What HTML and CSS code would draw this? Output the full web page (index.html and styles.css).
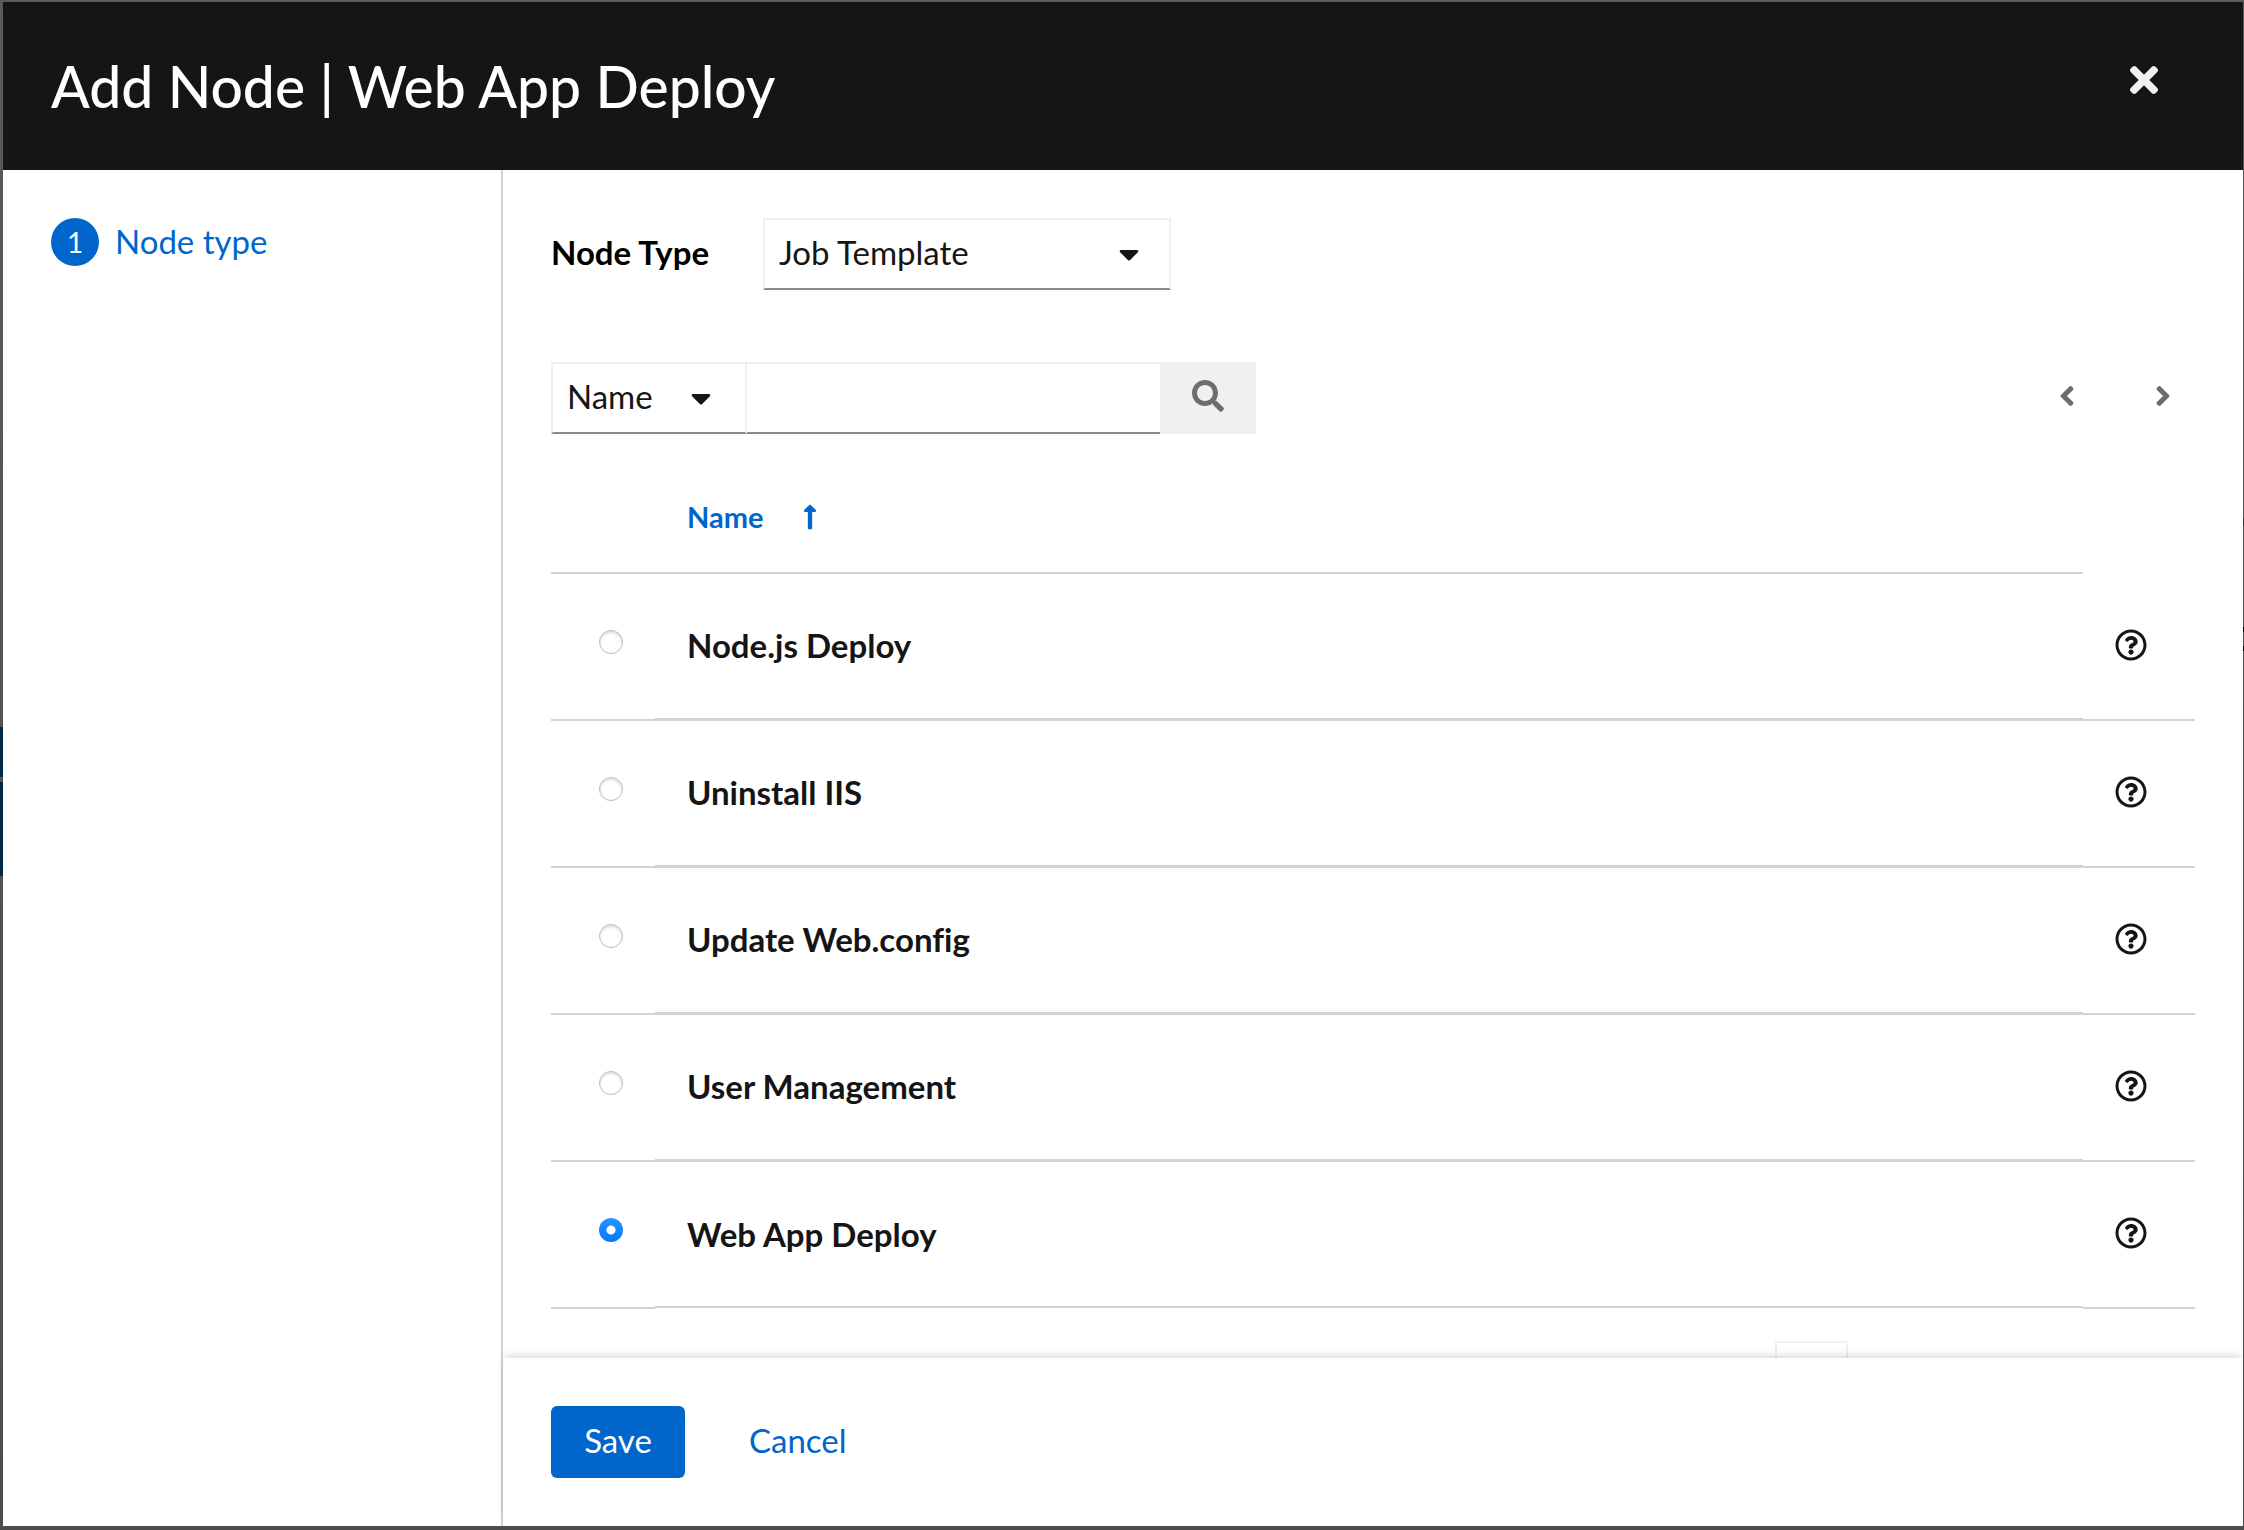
FILE: index.html
```html
<!DOCTYPE html>
<html lang="en">
<head>
<meta charset="utf-8">
<meta name="viewport" content="width=device-width, initial-scale=1">
<title>Add Node | Web App Deploy</title>
<link rel="stylesheet" href="styles.css">
</head>
<body>
<svg class="sprite" aria-hidden="true">
  <symbol id="caret-down" viewBox="0 0 320 512"><path d="M31.3 192h257.3c17.8 0 26.7 21.5 14.1 34.1L174.1 354.8c-7.8 7.8-20.5 7.8-28.3 0L17.2 226.1C4.6 213.5 13.5 192 31.3 192z"/></symbol>
  <symbol id="help" viewBox="0 0 512 512"><path d="M256 8C119.043 8 8 119.083 8 256c0 136.997 111.043 248 248 248s248-111.003 248-248C504 119.083 392.957 8 256 8zm0 448c-110.532 0-200-89.431-200-200 0-110.495 89.472-200 200-200 110.491 0 200 89.471 200 200 0 110.53-89.431 200-200 200zm107.244-255.2c0 67.052-72.421 68.084-72.421 92.863V300c0 6.627-5.373 12-12 12h-45.647c-6.627 0-12-5.373-12-12v-8.659c0-35.745 27.1-50.034 47.579-61.516 17.561-9.845 28.324-16.541 28.324-29.579 0-17.246-21.999-28.693-39.784-28.693-23.189 0-33.894 10.977-48.942 29.969-4.057 5.12-11.46 6.071-16.666 2.124l-27.824-21.098c-5.107-3.872-6.251-11.066-2.644-16.363C184.846 131.491 214.94 112 261.794 112c49.071 0 101.45 38.304 101.45 88.8zM298 368c0 23.159-18.841 42-42 42s-42-18.841-42-42 18.841-42 42-42 42 18.841 42 42z"/></symbol>
</svg>
<div class="wizard" role="dialog" aria-labelledby="wizard-title">
  <header class="wizard-header">
    <h1 id="wizard-title">Add Node | Web App Deploy</h1>
    <button class="close" type="button" aria-label="Close">
      <svg viewBox="0 80 352 352" width="28" height="28"><path d="M242.72 256l100.07-100.07c12.28-12.28 12.28-32.19 0-44.48l-22.24-22.24c-12.28-12.28-32.19-12.28-44.48 0L176 189.28 75.93 89.21c-12.28-12.28-32.19-12.28-44.48 0L9.21 111.45c-12.28 12.28-12.28 32.19 0 44.48L109.28 256 9.21 356.07c-12.28 12.28-12.28 32.19 0 44.48l22.24 22.24c12.28 12.28 32.2 12.28 44.48 0L176 322.72l100.07 100.07c12.28 12.28 32.2 12.28 44.48 0l22.24-22.24c12.28-12.28 12.28-32.19 0-44.48L242.72 256z"/></svg>
    </button>
  </header>
  <div class="wizard-body">
    <nav class="steps" aria-label="Steps">
      <a class="step" href="#node-type"><span class="step-number">1</span>Node type</a>
    </nav>
    <form class="panel">
      <div class="panel-scroll">
        <div class="type-row">
          <label class="type-label" for="node-type">Node Type</label>
          <span class="select type-select">
            <select id="node-type"><option>Job Template</option></select>
            <svg class="caret" width="20" height="32" aria-hidden="true"><use href="#caret-down"/></svg>
          </span>
        </div>
        <div class="toolbar">
          <span class="select key-select">
            <select id="search-key" aria-label="Search key"><option>Name</option></select>
            <svg class="caret" width="20" height="32" aria-hidden="true"><use href="#caret-down"/></svg>
          </span>
          <input class="search-input" type="text" aria-label="Search text">
          <button class="search-button" type="button" aria-label="Search">
            <svg viewBox="0 0 512 512" width="32" height="32"><path d="M505 442.7L405.3 343c-4.5-4.5-10.6-7-17-7H372c27.6-35.3 44-79.7 44-128C416 93.1 322.9 0 208 0S0 93.1 0 208s93.1 208 208 208c48.3 0 92.7-16.4 128-44v16.3c0 6.4 2.5 12.5 7 17l99.7 99.7c9.4 9.4 24.6 9.4 33.9 0l28.3-28.3c9.4-9.4 9.4-24.6.1-34zM208 336c-70.7 0-128-57.2-128-128 0-70.7 57.2-128 128-128 70.7 0 128 57.2 128 128 0 70.7-57.2 128-128 128z"/></svg>
          </button>
          <div class="pager">
            <button type="button" aria-label="Previous page"><svg viewBox="0 0 256 512" width="16" height="32"><path d="M31.7 239l136-136c9.4-9.4 24.6-9.4 33.9 0l22.6 22.6c9.4 9.4 9.4 24.6 0 33.9L127.9 256l96.4 96.4c9.4 9.4 9.4 24.6 0 33.9L201.7 409c-9.4 9.4-24.6 9.4-33.9 0l-136-136c-9.5-9.4-9.5-24.6-.1-34z"/></svg></button>
            <button type="button" aria-label="Next page"><svg viewBox="0 0 256 512" width="16" height="32"><path d="M224.3 273l-136 136c-9.4 9.4-24.6 9.4-33.9 0l-22.6-22.6c-9.4-9.4-9.4-24.6 0-33.9l96.4-96.4-96.4-96.4c-9.4-9.4-9.4-24.6 0-33.9L54.3 103c9.4-9.4 24.6-9.4 33.9 0l136 136c9.5 9.4 9.5 24.6.1 34z"/></svg></button>
          </div>
        </div>
        <table class="templates">
          <thead>
            <tr>
              <td class="pick"></td>
              <th class="name" scope="col"><button class="sort" type="button">Name<svg viewBox="0 0 256 512" width="14" height="28"><path d="M88 166.059V468c0 6.627 5.373 12 12 12h56c6.627 0 12-5.373 12-12V166.059h46.059c21.382 0 32.09-25.851 16.971-40.971l-86.059-86.059c-9.373-9.373-24.569-9.373-33.941 0l-86.059 86.059c-15.119 15.119-4.411 40.971 16.971 40.971H88z"/></svg></button></th>
              <td class="more"></td>
            </tr>
          </thead>
          <tbody>
            <tr>
              <td class="pick"><input type="radio" name="template" id="t1"></td>
              <td class="name"><label for="t1">Node.js Deploy</label></td>
              <td class="more"><button type="button" aria-label="About Node.js Deploy"><svg width="32" height="32"><use href="#help"/></svg></button></td>
            </tr>
            <tr>
              <td class="pick"><input type="radio" name="template" id="t2"></td>
              <td class="name"><label for="t2">Uninstall IIS</label></td>
              <td class="more"><button type="button" aria-label="About Uninstall IIS"><svg width="32" height="32"><use href="#help"/></svg></button></td>
            </tr>
            <tr>
              <td class="pick"><input type="radio" name="template" id="t3"></td>
              <td class="name"><label for="t3">Update Web.config</label></td>
              <td class="more"><button type="button" aria-label="About Update Web.config"><svg width="32" height="32"><use href="#help"/></svg></button></td>
            </tr>
            <tr>
              <td class="pick"><input type="radio" name="template" id="t4"></td>
              <td class="name"><label for="t4">User Management</label></td>
              <td class="more"><button type="button" aria-label="About User Management"><svg width="32" height="32"><use href="#help"/></svg></button></td>
            </tr>
            <tr>
              <td class="pick"><input type="radio" name="template" id="t5" checked></td>
              <td class="name"><label for="t5">Web App Deploy</label></td>
              <td class="more"><button type="button" aria-label="About Web App Deploy"><svg width="32" height="32"><use href="#help"/></svg></button></td>
            </tr>
          </tbody>
        </table>
        <div class="page-picker"><input type="text" aria-label="Current page"></div>
      </div>
      <footer class="wizard-footer">
        <button class="save" type="button">Save</button>
        <button class="cancel" type="button">Cancel</button>
      </footer>
    </form>
  </div>
</div>
</body>
</html>
```
FILE: styles.css
```css
:root {
  --text: #151515;
  --blue: #06c;
  --line: #d2d2d2;
  --field: #f0f0f0;
  --field-line: #8a8d90;
  --muted: #6a6e73;
}

* {
  box-sizing: border-box;
}

body {
  margin: 0;
  padding: 2px 1px 4px 3px;
  height: 100vh;
  /* the dimmed page that shows round the dialog */
  background:
    linear-gradient(#00294a, #00294a) 0 727px / 3px 50px no-repeat,
    linear-gradient(#00294a, #00294a) 0 782px / 3px 94px no-repeat,
    linear-gradient(#333, #333) 100% 518px / 1px 8px no-repeat,
    linear-gradient(#000, #000) 100% 627px / 1px 5px no-repeat,
    linear-gradient(#000, #000) 100% 646px / 1px 5px no-repeat,
    linear-gradient(#5a5a5a, #4d4d4d);
  color: var(--text);
  font: 33px/48px Lato, "Open Sans", sans-serif;
  font-variant-ligatures: none;
}

button,
input,
select {
  margin: 0;
  padding: 0;
  border: 0;
  border-radius: 0;
  background: none;
  color: inherit;
  font: inherit;
}

svg {
  display: block;
  fill: currentColor;
}

.sprite {
  position: absolute;
  width: 0;
  height: 0;
}

.wizard {
  display: flex;
  flex-direction: column;
  height: 100%;
  background: #fff;
}

.wizard-header {
  display: flex;
  align-items: flex-start;
  justify-content: space-between;
  padding: 48px;
  background: var(--text);
  color: #fff;
}

h1 {
  margin: 0;
  font-size: 57px;
  font-weight: 500;
  line-height: 72px;
}

.close {
  padding: 16px 37px;
  color: var(--field);
}

.wizard-body {
  display: flex;
  flex: 1;
  min-height: 0;
}

.steps {
  flex: 0 0 500px;
  padding: 48px;
  border-right: 2px solid var(--line);
}

.step {
  display: flex;
  gap: 16px;
  color: var(--blue);
  line-height: 46px;
  text-decoration: none;
}

.step-number {
  width: 48px;
  height: 48px;
  border-radius: 50%;
  background: var(--blue);
  color: #fff;
  font-size: 28px;
  line-height: 48px;
  text-align: center;
}

.panel {
  display: flex;
  flex: 1;
  flex-direction: column;
  min-width: 0;
}

.panel-scroll {
  flex: 1;
  min-height: 0;
  padding: 48px 48px 0;
  overflow: auto;
  scrollbar-width: none;
}

.type-row {
  display: flex;
  align-items: center;
}

.type-label {
  width: 212px;
  padding-bottom: 4px;
  color: #000;
  font-weight: 700;
}

.select {
  display: grid;
  align-items: center;
}

.select > * {
  grid-area: 1 / 1;
}

.select select {
  width: 100%;
  height: 72px;
  padding: 0 64px 4px 14px;
  border: 2px solid var(--field);
  border-bottom-color: var(--field-line);
  appearance: none;
}

.caret {
  justify-self: end;
  margin-right: 32px;
  pointer-events: none;
}

.type-select {
  width: 408px;
}

.toolbar {
  display: flex;
  margin-top: 72px;
}

.key-select {
  width: 196px;
}

.key-select .caret {
  margin-right: 36px;
}

.search-input {
  width: 413px;
  height: 72px;
  padding: 0 16px;
  border-top: 2px solid var(--field);
  border-bottom: 2px solid var(--field-line);
}

.search-button {
  display: grid;
  place-items: center;
  width: 96px;
  padding-bottom: 4px;
  background: var(--field);
  color: var(--muted);
}

.pager {
  display: flex;
  margin-left: auto;
  color: var(--muted);
}

.pager button {
  display: grid;
  place-items: center;
  width: 64px;
  padding-bottom: 4px;
}

.pager button + button {
  margin-left: 32px;
}

.templates {
  width: 100%;
  margin-top: 28px;
  border-collapse: separate;
  border-spacing: 0;
  table-layout: fixed;
}

.templates td,
.templates th {
  height: 147px;
  padding: 0 0 3px;
  border-bottom: 2px solid var(--line);
  text-align: left;
}

.templates thead td,
.templates thead th {
  height: 112px;
  padding: 0;
}

.templates .pick {
  width: 104px;
  padding: 0 0 10px 48px;
}

.templates .name {
  padding-left: 32px;
  font-weight: 700;
}

.templates .more {
  width: 112px;
  padding: 0 0 3px 32px;
}

.templates thead .more {
  border-bottom: 0;
}

/* the name cells carry a heavier rule than the cells beside them */
.templates tbody .name {
  box-shadow: inset 0 -1px 0 var(--line);
}

.templates tbody tr:last-child .name {
  border-bottom: 1px solid #fff;
  box-shadow: inset 0 -2px 0 var(--line);
}

.sort {
  display: flex;
  align-items: center;
  gap: 40px;
  color: var(--blue);
  font-size: 29px;
  font-weight: 700;
}

.more button {
  display: block;
}

input[type="radio"] {
  display: block;
  width: 24px;
  height: 24px;
  border: 1px solid #bbb;
  border-radius: 50%;
  background: #fff;
  box-shadow: inset 0 2px 3px #ddd;
  appearance: none;
}

input[type="radio"]:checked {
  border: 0;
  background: radial-gradient(circle, #fff 4px, transparent 5px), linear-gradient(#2b93ff, #007aff);
  box-shadow: none;
}

.page-picker {
  display: flex;
  justify-content: flex-end;
  margin-top: 32px;
  padding-right: 347px;
}

.page-picker input {
  width: 73px;
  height: 72px;
  border: 2px solid var(--field);
  border-bottom-color: var(--field-line);
}

.wizard-footer {
  position: relative;
  display: flex;
  gap: 32px;
  padding: 48px;
  background: #fff;
  box-shadow: 0 -4px 8px -2px rgba(3, 3, 3, 0.16);
}

.save,
.cancel {
  min-width: 134px;
  padding: 10px 32px 14px;
  border-radius: 6px;
}

.save {
  background: var(--blue);
  color: #fff;
}

.cancel {
  color: var(--blue);
}
```
